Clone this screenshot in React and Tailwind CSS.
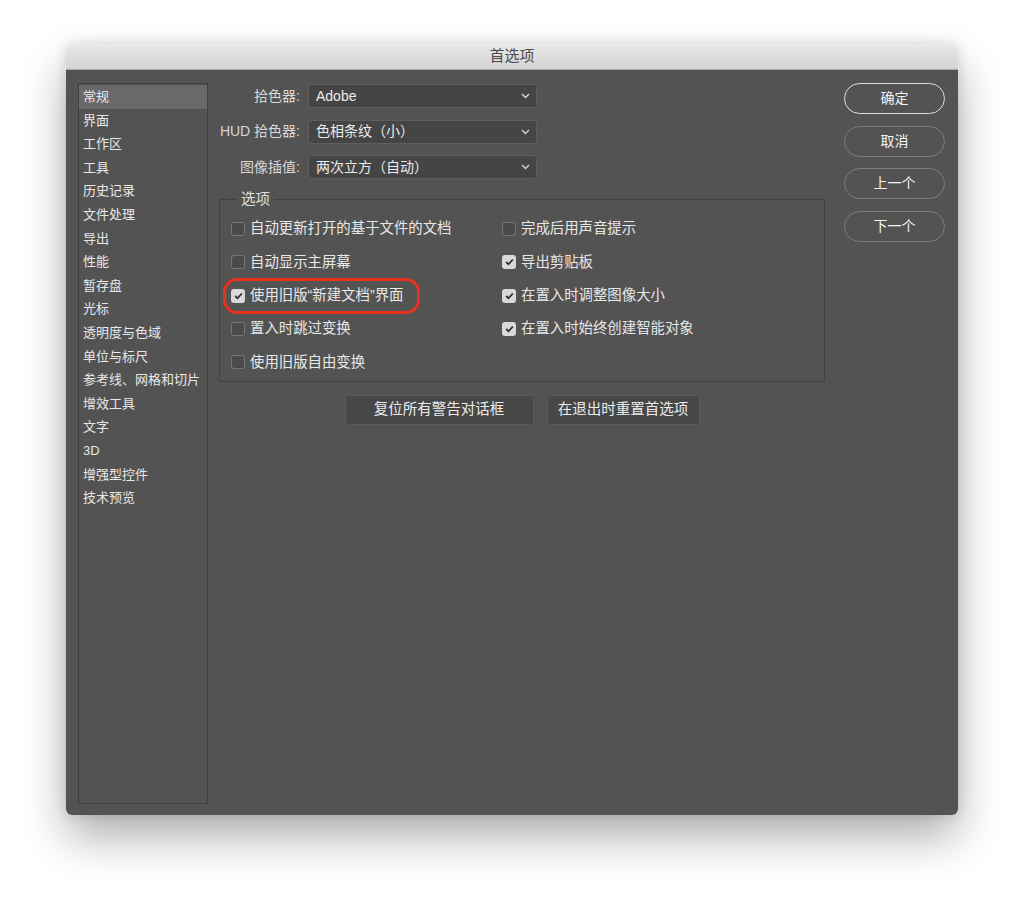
import React from "react";

const sidebarItems = [
  "常规",
  "界面",
  "工作区",
  "工具",
  "历史记录",
  "文件处理",
  "导出",
  "性能",
  "暂存盘",
  "光标",
  "透明度与色域",
  "单位与标尺",
  "参考线、网格和切片",
  "增效工具",
  "文字",
  "3D",
  "增强型控件",
  "技术预览",
];

const dropdowns = [
  { label: "拾色器:", value: "Adobe" },
  { label: "HUD 拾色器:", value: "色相条纹（小）" },
  { label: "图像插值:", value: "两次立方（自动）" },
];

// left column then right column, row by row
const options = [
  { text: "自动更新打开的基于文件的文档", checked: false },
  { text: "完成后用声音提示", checked: false },
  { text: "自动显示主屏幕", checked: false },
  { text: "导出剪贴板", checked: true },
  { text: "使用旧版“新建文档”界面", checked: true, marked: true },
  { text: "在置入时调整图像大小", checked: true },
  { text: "置入时跳过变换", checked: false },
  { text: "在置入时始终创建智能对象", checked: true },
  { text: "使用旧版自由变换", checked: false },
];

const Chevron = () => (
  <svg width="9" height="6" viewBox="0 0 9 6" fill="none">
    <polyline points="1,1 4.5,4.5 8,1" stroke="#d6d6d6" strokeWidth="1.4" />
  </svg>
);

const Checkbox = ({ checked }) =>
  checked ? (
    <span className="w-[14px] h-[14px] rounded-[3px] bg-[#d9d9d9] flex items-center justify-center shrink-0">
      <svg width="9" height="8" viewBox="0 0 9 8" fill="none">
        <polyline points="1.2,4 3.5,6.3 7.8,1.5" stroke="#2e2e2e" strokeWidth="1.8" />
      </svg>
    </span>
  ) : (
    <span className="w-[14px] h-[14px] rounded-[3px] bg-[#4a4a4a] border border-[#777777] shrink-0" />
  );

const App = () => {
  return (
    <div className="min-h-screen bg-white pt-[44px] pl-[66px] font-['Liberation_Sans','Noto_Sans_CJK_SC',sans-serif]">
      <div className="w-[892px] rounded-[6px] overflow-hidden shadow-[0_22px_45px_rgba(0,0,0,0.32),0_0_12px_rgba(0,0,0,0.12)]">
        {/* Title bar */}
        <div className="h-[26px] flex items-center justify-center bg-gradient-to-b from-[#e9e9e9] to-[#d3d3d3] border-b border-[#a9a9a9]">
          <span className="text-[15px] text-[#4a4a4a]">首选项</span>
        </div>

        <div className="h-[745px] bg-[#535353] flex pt-[13px] pl-[12px] pr-[13px] pb-[11px] text-[#e8e8e8]">
          {/* Sidebar */}
          <div className="w-[130px] h-full border border-[#404040] pt-px">
            {sidebarItems.map((item, i) => (
              <div
                key={i}
                className={`h-[23.6px] flex items-center pl-[4px] text-[13px] whitespace-nowrap ${
                  i === 0 ? "bg-[#696969]" : ""
                }`}
              >
                {item}
              </div>
            ))}
          </div>

          {/* Main */}
          <div className="ml-[11px] w-[606px] flex flex-col">
            <div className="flex flex-col gap-[11.5px] mt-px">
              {dropdowns.map((d, i) => (
                <div key={i} className="flex items-center h-[24px]">
                  <span className="w-[81px] text-right text-[14px] text-[#d8d8d8] whitespace-nowrap">{d.label}</span>
                  <div className="ml-[8px] w-[229px] h-[24px] bg-[#454545] border border-[#5e5e5e] rounded-[3px] flex items-center justify-between pl-[7px] pr-[6px]">
                    <span className="text-[14px] text-[#ececec]">{d.value}</span>
                    <Chevron />
                  </div>
                </div>
              ))}
            </div>

            <fieldset className="mt-[10px] border border-[#414141] pl-[11px] pb-[2px]">
              <legend className="ml-[6px] px-[4px] text-[14.5px] leading-[20px] text-[#e0e0e0]">选项</legend>
              <div className="grid grid-cols-[271px_1fr] pt-[3.5px]">
                {options.map((o, i) => (
                  <div key={i} className="relative h-[33.3px] flex items-center">
                    <Checkbox checked={o.checked} />
                    <span className="ml-[5px] text-[14.4px] whitespace-nowrap">{o.text}</span>
                    {o.marked && (
                      <span className="absolute left-[-8px] top-[-1px] w-[197px] h-[36px] border-[3px] border-[#e8321e] rounded-[14px]" />
                    )}
                  </div>
                ))}
              </div>
            </fieldset>

            <div className="mt-[13px] flex justify-center gap-[13px]">
              <button className="w-[189px] h-[30px] bg-[#474747] border border-[#5b5b5b] rounded-[3px] text-[14.5px] text-[#ececec]">
                复位所有警告对话框
              </button>
              <button className="w-[153px] h-[30px] bg-[#474747] border border-[#5b5b5b] rounded-[3px] text-[14.5px] text-[#ececec]">
                在退出时重置首选项
              </button>
            </div>
          </div>

          {/* Right buttons */}
          <div className="ml-[19px] w-[101px] flex flex-col gap-[11.7px]">
            <button className="h-[31px] rounded-full border-[1.5px] border-[#dedede] text-[14px] text-[#f2f2f2]">确定</button>
            <button className="h-[31px] rounded-full border border-[#7c7c7c] text-[14px] text-[#f2f2f2]">取消</button>
            <button className="h-[31px] rounded-full border border-[#7c7c7c] text-[14px] text-[#f2f2f2]">上一个</button>
            <button className="h-[31px] rounded-full border border-[#7c7c7c] text-[14px] text-[#f2f2f2]">下一个</button>
          </div>
        </div>
      </div>
    </div>
  );
};

export default App;
